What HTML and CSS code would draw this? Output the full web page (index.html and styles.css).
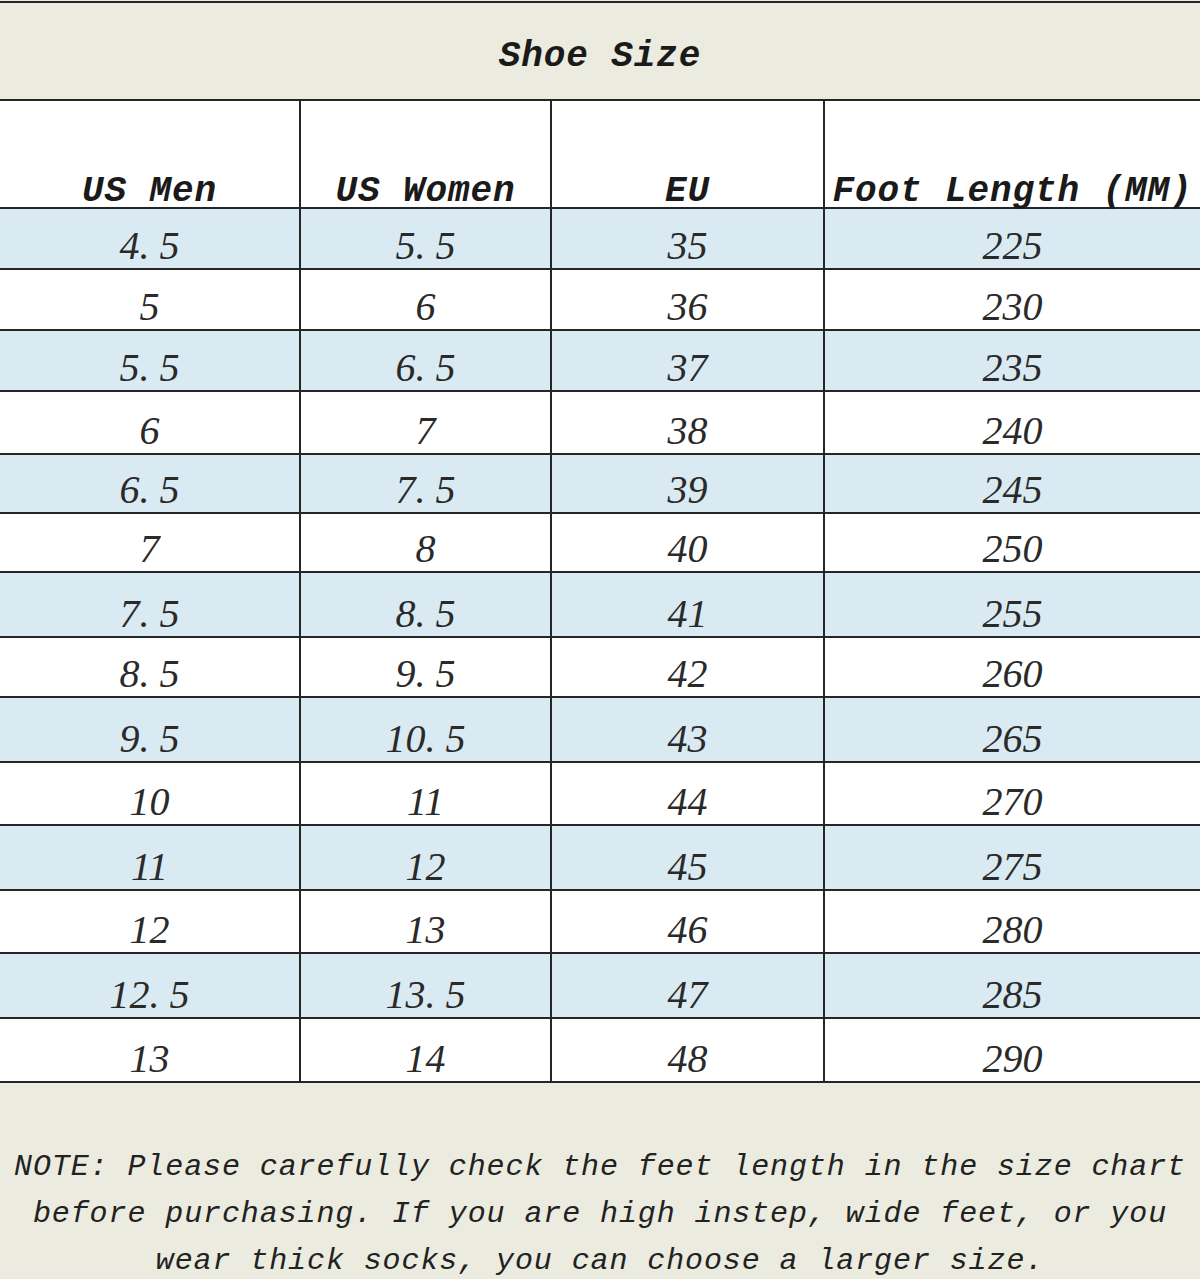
FILE: index.html
```html
<!DOCTYPE html>
<html>
<head>
<meta charset="utf-8">
<title>Shoe Size</title>
<link rel="stylesheet" href="styles.css">
</head>
<body>
<div class="page">
  <div class="title-band"><h1 class="title">Shoe Size</h1></div>
  <div class="chart">
    <div class="cell head">US Men</div>
    <div class="cell head">US Women</div>
    <div class="cell head">EU</div>
    <div class="cell head">Foot Length (MM)</div>

    <div class="cell blue">4. 5</div><div class="cell blue">5. 5</div><div class="cell blue">35</div><div class="cell blue">225</div>
    <div class="cell">5</div><div class="cell">6</div><div class="cell">36</div><div class="cell">230</div>
    <div class="cell blue">5. 5</div><div class="cell blue">6. 5</div><div class="cell blue">37</div><div class="cell blue">235</div>
    <div class="cell">6</div><div class="cell">7</div><div class="cell">38</div><div class="cell">240</div>
    <div class="cell blue">6. 5</div><div class="cell blue">7. 5</div><div class="cell blue">39</div><div class="cell blue">245</div>
    <div class="cell">7</div><div class="cell">8</div><div class="cell">40</div><div class="cell">250</div>
    <div class="cell blue">7. 5</div><div class="cell blue">8. 5</div><div class="cell blue">41</div><div class="cell blue">255</div>
    <div class="cell">8. 5</div><div class="cell">9. 5</div><div class="cell">42</div><div class="cell">260</div>
    <div class="cell blue">9. 5</div><div class="cell blue">10. 5</div><div class="cell blue">43</div><div class="cell blue">265</div>
    <div class="cell">10</div><div class="cell">11</div><div class="cell">44</div><div class="cell">270</div>
    <div class="cell blue">11</div><div class="cell blue">12</div><div class="cell blue">45</div><div class="cell blue">275</div>
    <div class="cell">12</div><div class="cell">13</div><div class="cell">46</div><div class="cell">280</div>
    <div class="cell blue">12. 5</div><div class="cell blue">13. 5</div><div class="cell blue">47</div><div class="cell blue">285</div>
    <div class="cell">13</div><div class="cell">14</div><div class="cell">48</div><div class="cell">290</div>
  </div>
  <div class="note-band">
    <p class="note">NOTE: Please carefully check the feet length in the size chart<br>before purchasing. If you are high instep, wide feet, or you<br>wear thick socks, you can choose a larger size.</p>
  </div>
</div>
</body>
</html>
```

FILE: styles.css
```css
html, body {
  margin: 0;
  padding: 0;
  background: #ebecdf;
}

.page {
  width: 1200px;
  height: 1279px;
  overflow: hidden;
  background: #ebecdf;
  padding-top: 1px;
  box-sizing: border-box;
  color: #1c1c1c;
}

.title-band {
  border-top: 2px solid #262626;
  border-bottom: 2px solid #262626;
  height: 96px;
  display: flex;
  align-items: center;
  justify-content: center;
  background: #ebecdf;
}

.title {
  margin: 0;
  padding-top: 12px;
  font-family: "Liberation Mono", "DejaVu Sans Mono", monospace;
  font-style: italic;
  font-weight: bold;
  font-size: 36px;
  letter-spacing: 0.9px;
  line-height: 36px;
  color: #1a1a1a;
}

.chart {
  display: grid;
  grid-template-columns: 299px 249px 271px 375px;
  grid-template-rows: 106px 59px 59px 59px 61px 57px 57px 63px 58px 63px 61px 63px 61px 63px 62px;
  gap: 2px;
  background: #262626;
  border-bottom: 2px solid #262626;
}

.cell {
  background: #ffffff;
  display: flex;
  align-items: flex-end;
  justify-content: center;
  padding-bottom: 2px;
  box-sizing: border-box;
  font-family: "Liberation Serif", "Times New Roman", serif;
  font-style: italic;
  font-size: 40px;
  line-height: 40px;
  white-space: pre;
  color: #2a2a2a;
}

.cell.blue {
  background: #daeaf2;
}

.cell.head {
  font-family: "Liberation Mono", "DejaVu Sans Mono", monospace;
  font-weight: bold;
  font-size: 36px;
  line-height: 30px;
  letter-spacing: 0.9px;
  padding-bottom: 0;
  color: #1a1a1a;
}

.note-band {
  background: #ebecdf;
  padding-top: 61px;
}

.note {
  margin: 0;
  text-align: center;
  font-family: "Liberation Mono", "DejaVu Sans Mono", monospace;
  font-style: italic;
  font-size: 30px;
  line-height: 47px;
  letter-spacing: 0.9px;
  color: #222;
}
```
